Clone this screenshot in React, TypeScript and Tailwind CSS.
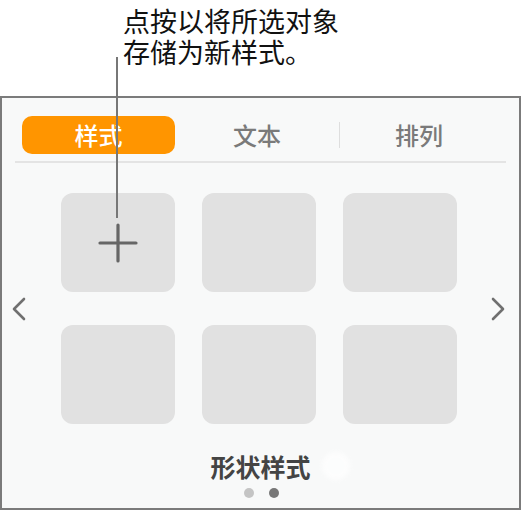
import React from "react";

function Chevron({ dir }: { dir: "left" | "right" }) {
  return (
    <svg width="16" height="24" viewBox="0 0 16 24" fill="none">
      <path
        d={dir === "left" ? "M13 2 L3 12 L13 22" : "M3 2 L13 12 L3 22"}
        stroke="#707070"
        strokeWidth="2.6"
        strokeLinecap="round"
        strokeLinejoin="round"
      />
    </svg>
  );
}

function PlusIcon() {
  return (
    <svg width="40" height="40" viewBox="0 0 40 40" fill="none">
      <path d="M20 2 V38 M2 20 H38" stroke="#666" strokeWidth="3.2" strokeLinecap="round" />
    </svg>
  );
}

export default function App() {
  const tiles = [0, 1, 2, 3, 4, 5];

  return (
    <div
      className="relative h-[513px] w-[524px] overflow-hidden bg-white"
      style={{ fontFamily: '"Noto Sans CJK SC", "Noto Sans", sans-serif' }}
    >
      {/* callout */}
      <div className="h-[96px] pl-[123px] pt-[5px]">
        <p className="text-[27px] leading-[31px] text-[#111]">
          点按以将所选对象
          <br />
          存储为新样式。
        </p>
      </div>

      {/* panel */}
      <div className="h-[414px] w-[521px] border-2 border-[#7b7b7b] bg-[#f8f9f9]">
        <div className="flex items-center pl-[20px] pt-[18px]">
          <div className="flex h-[38px] w-[153px] items-center justify-center rounded-[10px] bg-[#ff9500] text-[24px] font-medium text-white">
            样式
          </div>
          <div className="flex w-[164px] items-center justify-center text-[24px] font-medium text-[#7a7a7a]">
            文本
          </div>
          <div className="h-[26px] w-[1px] bg-[#dedede]" />
          <div className="flex w-[158px] items-center justify-center text-[24px] font-medium text-[#7a7a7a]">
            排列
          </div>
        </div>

        <div className="mx-[13px] mt-[7px] h-[2px] bg-[#e4e4e4]" />

        <div className="mt-[30px] flex items-center">
          <div className="w-[59px] pl-[9px]">
            <Chevron dir="left" />
          </div>
          <div className="grid grid-cols-[114px_114px_114px] gap-x-[27px] gap-y-[33px]">
            {tiles.map((i) => (
              <div
                key={i}
                className="flex h-[99px] items-center justify-center rounded-[12px] bg-[#e1e1e1]"
              >
                {i === 0 && <PlusIcon />}
              </div>
            ))}
          </div>
          <div className="pl-[33px]">
            <Chevron dir="right" />
          </div>
        </div>

        <div className="mt-[25px] flex justify-center">
          <div className="relative text-[25px] font-semibold leading-[34px] text-[#444]">
            形状样式
            <span className="absolute left-[112px] top-[3px] h-[28px] w-[28px] rounded-full bg-white opacity-70 blur-[2px]" />
          </div>
        </div>

        <div className="mt-[5px] flex justify-center gap-[15px] pl-[2px]">
          <span className="h-[10px] w-[10px] rounded-full bg-[#c4c4c4]" />
          <span className="h-[10px] w-[10px] rounded-full bg-[#777]" />
        </div>
      </div>

      {/* leader line */}
      <div className="absolute left-[116px] top-[57px] h-[161px] w-[2px] bg-[#777]" />
    </div>
  );
}
